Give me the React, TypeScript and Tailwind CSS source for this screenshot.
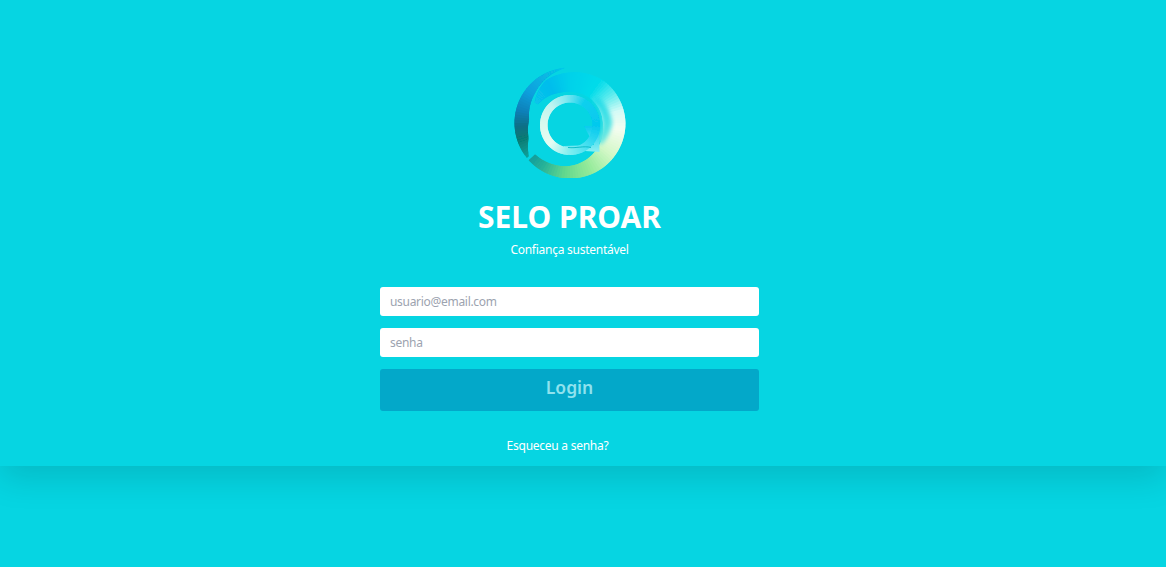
type Stop = [number, string];

function hex(c: string) {
  return [1, 3, 5].map((i) => parseInt(c.slice(i, i + 2), 16));
}

// color at an angle, walking along the stops
function colorAt(stops: Stop[], a: number) {
  for (let i = 0; i < stops.length - 1; i++) {
    const [a0, c0] = stops[i];
    const [a1, c1] = stops[i + 1];
    if (a >= a0 && a <= a1) {
      const t = (a - a0) / (a1 - a0);
      const x = hex(c0);
      const y = hex(c1);
      return `rgb(${x.map((v, j) => Math.round(v + (y[j] - v) * t)).join(',')})`;
    }
  }
  return stops[stops.length - 1][1];
}

function lerp(stops: [number, number][], a: number) {
  for (let i = 0; i < stops.length - 1; i++) {
    const [a0, v0] = stops[i];
    const [a1, v1] = stops[i + 1];
    if (a >= a0 && a <= a1) return v0 + (v1 - v0) * ((a - a0) / (a1 - a0));
  }
  return stops[stops.length - 1][1];
}

function pt(cx: number, cy: number, r: number, a: number) {
  const rad = (a * Math.PI) / 180;
  return `${(cx + r * Math.sin(rad)).toFixed(2)},${(cy - r * Math.cos(rad)).toFixed(2)}`;
}

function Band(props: {
  cx: number;
  cy: number;
  from: number;
  to: number;
  outer: [number, number][];
  inner: [number, number][];
  colors: Stop[];
}) {
  const { cx, cy, from, to, outer, inner, colors } = props;
  const items = [];
  for (let a = from; a < to; a += 3) {
    const b = Math.min(a + 6, to);
    const points = [
      pt(cx, cy, lerp(outer, a), a),
      pt(cx, cy, lerp(outer, b), b),
      pt(cx, cy, lerp(inner, b), b),
      pt(cx, cy, lerp(inner, a), a),
    ].join(' ');
    items.push(<polygon key={a} points={points} fill={colorAt(colors, a)} />);
  }
  return <g>{items}</g>;
}

function Logo() {
  return (
    <svg width="112" height="112" viewBox="0 0 112 112" className="block">
      <defs>
        <filter id="soft" x="-10%" y="-10%" width="120%" height="120%">
          <feGaussianBlur stdDeviation="0.6" />
        </filter>
        <filter id="softer" x="-20%" y="-20%" width="140%" height="140%">
          <feGaussianBlur stdDeviation="2.2" />
        </filter>
        <linearGradient id="corner" x1="0" y1="0" x2="0" y2="1">
          <stop offset="0" stopColor="#05cbee" />
          <stop offset="1" stopColor="#8ef0f2" />
        </linearGradient>
      </defs>
      <g filter="url(#soft)">
        {/* dark crescent on the left */}
        <Band
          cx={56}
          cy={57}
          from={231}
          to={354}
          outer={[[231, 55.5], [354, 55.5]]}
          inner={[[231, 53], [250, 44], [275, 41], [310, 46], [354, 55]]}
          colors={[
            [231, '#0a9f98'],
            [250, '#077a72'],
            [265, '#0a6f86'],
            [282, '#0a80b8'],
            [305, '#0a9fdd'],
            [354, '#06cbe8'],
          ]}
        />
        {/* main ring, blue on top, white on the right, green at the bottom */}
        <Band
          cx={56}
          cy={57}
          from={-60}
          to={228}
          outer={[[-60, 41], [-30, 49], [0, 50.5], [40, 54], [90, 55.5], [228, 55.5]]}
          inner={[[-60, 37], [-20, 32], [0, 31], [45, 32], [90, 33], [130, 37], [180, 43], [228, 47]]}
          colors={[
            [-60, '#08c4ea'],
            [-30, '#05bdec'],
            [0, '#03d2ea'],
            [35, '#03dcea'],
            [55, '#60ecee'],
            [75, '#d4fbf6'],
            [95, '#f4fdf0'],
            [125, '#d4f8c8'],
            [155, '#95eb9a'],
            [185, '#62d88e'],
            [210, '#28b298'],
            [228, '#0f9c9c'],
          ]}
        />
        {/* cyan glow on the inner side of the white part */}
        <g filter="url(#softer)">
          <Band
            cx={56}
            cy={57}
            from={45}
            to={125}
            outer={[[45, 38], [90, 42], [125, 38]]}
            inner={[[45, 32], [125, 32]]}
            colors={[
              [45, '#20dcea'],
              [125, '#70e8e0'],
            ]}
          />
        </g>
        {/* speech bubble */}
        <path d="M70 60 L85 60 L85.5 86 L50 83.5 L50 80 L80 79 Z" fill="url(#corner)" />
        <Band
          cx={56}
          cy={59}
          from={-180}
          to={180}
          outer={[[-180, 30], [180, 30]]}
          inner={[[-180, 22.5], [180, 22.5]]}
          colors={[
            [-180, '#80eef0'],
            [-135, '#e6fcf2'],
            [-90, '#d8faee'],
            [-45, '#c0f4f0'],
            [-10, '#80e8f0'],
            [30, '#0fd0ee'],
            [90, '#05c9ee'],
            [135, '#40def0'],
            [180, '#80eef0'],
          ]}
        />
        <path d="M54 81.5 C62 82.5 70 79.5 77 81.5" stroke="#04b8c4" strokeWidth="0.9" fill="none" />
      </g>
    </svg>
  );
}

export default function App() {
  const font = 'font-["Noto_Sans","Open_Sans",sans-serif]';
  return (
    <div className={`min-h-[567px] bg-[#06d5e2] ${font}`}>
      <main className="flex h-[466px] flex-col items-center bg-[#06d5e2] pt-[66px] pr-[27px] shadow-[0_12px_32px_rgba(0,0,0,0.13)]">
        <Logo />
        <h1 className="mt-[18px] text-[30px] leading-[41px] font-bold text-white">SELO PROAR</h1>
        <p className="mt-[4px] text-[12px] leading-[18px] tracking-[-0.26px] text-white">Confiança sustentável</p>
        <form className="mt-[28px] flex w-[379px] flex-col">
          <input
            placeholder="usuario@email.com"
            className="h-[29px] rounded-[3px] bg-white px-[10px] text-[12px] tracking-[-0.3px] text-gray-700 outline-none placeholder:text-[#9ca3af]"
          />
          <input
            placeholder="senha"
            className="mt-[12px] h-[29px] rounded-[3px] bg-white px-[10px] text-[12px] tracking-[-0.3px] text-gray-700 outline-none placeholder:text-[#9ca3af]"
          />
          <button
            type="button"
            className="mt-[12px] h-[42px] rounded-[3px] bg-[#03a8c9] pb-[5px] text-[17.5px] font-semibold text-[#8fe2ee]"
          >
            Login
          </button>
        </form>
        <a className="mt-[26px] mr-[24px] text-[12px] leading-[18px] tracking-[-0.26px] text-white">Esqueceu a senha?</a>
      </main>
    </div>
  );
}
